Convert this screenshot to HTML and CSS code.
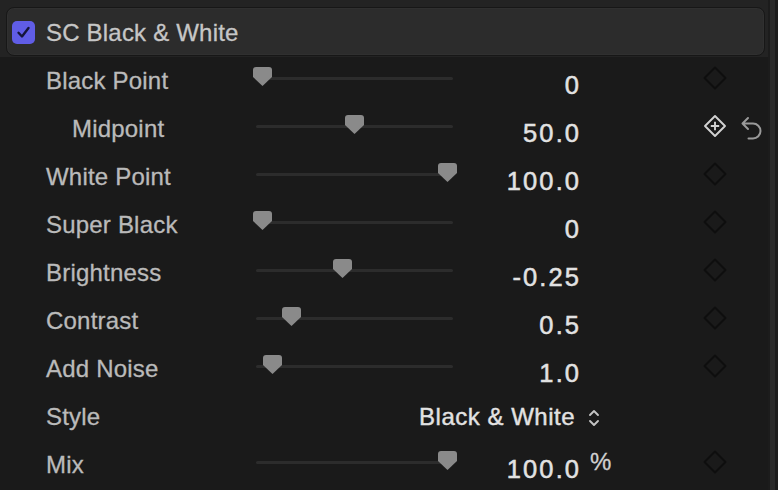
FILE: index.html
```html
<!DOCTYPE html>
<html lang="en">
<head>
  <meta charset="UTF-8">
  <title>SC Black &amp; White</title>
  <link rel="stylesheet" href="styles.css">
</head>
<body>
  <div class="panel">
    <div class="inspector">
      <div class="header-wrap">
        <div class="header">
          <span class="checkbox">
            <svg width="23" height="23" viewBox="0 0 23 23"><path d="M6.5 11.8 L10 15.5 L16.5 7" fill="none" stroke="#15153a" stroke-width="2.4" stroke-linecap="round" stroke-linejoin="round"/></svg>
          </span>
          <span class="title">SC Black &amp; White</span>
        </div>
      </div>

      <div class="rows">
        <div class="row">
          <div class="label">Black Point</div>
          <div class="slider"><div class="track"></div><svg class="thumb" style="left:-3px" width="19" height="19" viewBox="0 0 19 19"><path d="M3 0 H16 Q19 0 19 3 V10 L9.5 19 L0 10 V3 Q0 0 3 0 Z"/></svg></div>
          <div class="value num">0</div>
          <div class="unit"></div>
          <div class="key"><svg width="24" height="24" viewBox="0 0 24 24"><path d="M12 1.5 L22.5 12 L12 22.5 L1.5 12 Z"/></svg></div>
          <div class="reset"></div>
        </div>

        <div class="row">
          <div class="label sub">Midpoint</div>
          <div class="slider"><div class="track"></div><svg class="thumb" style="left:89px" width="19" height="19" viewBox="0 0 19 19"><path d="M3 0 H16 Q19 0 19 3 V10 L9.5 19 L0 10 V3 Q0 0 3 0 Z"/></svg></div>
          <div class="value num">50.0</div>
          <div class="unit"></div>
          <div class="key on"><svg width="24" height="24" viewBox="0 0 24 24"><path d="M12 2 L22 12 L12 22 L2 12 Z"/><path d="M12 7.8 V16.2 M7.8 12 H16.2"/></svg></div>
          <div class="reset">
            <svg width="23" height="27" viewBox="0 0 23 27"><path d="M8 3 L2.5 8.5 L8 14 M2.5 8.5 H13 A7.5 7.5 0 0 1 13 23.5 H8.5" fill="none" stroke="#9a9a9a" stroke-width="2" stroke-linecap="round" stroke-linejoin="round"/></svg>
          </div>
        </div>

        <div class="row">
          <div class="label">White Point</div>
          <div class="slider"><div class="track"></div><svg class="thumb" style="left:182px" width="19" height="19" viewBox="0 0 19 19"><path d="M3 0 H16 Q19 0 19 3 V10 L9.5 19 L0 10 V3 Q0 0 3 0 Z"/></svg></div>
          <div class="value num">100.0</div>
          <div class="unit"></div>
          <div class="key"><svg width="24" height="24" viewBox="0 0 24 24"><path d="M12 1.5 L22.5 12 L12 22.5 L1.5 12 Z"/></svg></div>
          <div class="reset"></div>
        </div>

        <div class="row">
          <div class="label">Super Black</div>
          <div class="slider"><div class="track"></div><svg class="thumb" style="left:-3px" width="19" height="19" viewBox="0 0 19 19"><path d="M3 0 H16 Q19 0 19 3 V10 L9.5 19 L0 10 V3 Q0 0 3 0 Z"/></svg></div>
          <div class="value num">0</div>
          <div class="unit"></div>
          <div class="key"><svg width="24" height="24" viewBox="0 0 24 24"><path d="M12 1.5 L22.5 12 L12 22.5 L1.5 12 Z"/></svg></div>
          <div class="reset"></div>
        </div>

        <div class="row">
          <div class="label">Brightness</div>
          <div class="slider"><div class="track"></div><svg class="thumb" style="left:77px" width="19" height="19" viewBox="0 0 19 19"><path d="M3 0 H16 Q19 0 19 3 V10 L9.5 19 L0 10 V3 Q0 0 3 0 Z"/></svg></div>
          <div class="value num">-0.25</div>
          <div class="unit"></div>
          <div class="key"><svg width="24" height="24" viewBox="0 0 24 24"><path d="M12 1.5 L22.5 12 L12 22.5 L1.5 12 Z"/></svg></div>
          <div class="reset"></div>
        </div>

        <div class="row">
          <div class="label">Contrast</div>
          <div class="slider"><div class="track"></div><svg class="thumb" style="left:26px" width="19" height="19" viewBox="0 0 19 19"><path d="M3 0 H16 Q19 0 19 3 V10 L9.5 19 L0 10 V3 Q0 0 3 0 Z"/></svg></div>
          <div class="value num">0.5</div>
          <div class="unit"></div>
          <div class="key"><svg width="24" height="24" viewBox="0 0 24 24"><path d="M12 1.5 L22.5 12 L12 22.5 L1.5 12 Z"/></svg></div>
          <div class="reset"></div>
        </div>

        <div class="row">
          <div class="label">Add Noise</div>
          <div class="slider"><div class="track"></div><svg class="thumb" style="left:7px" width="19" height="19" viewBox="0 0 19 19"><path d="M3 0 H16 Q19 0 19 3 V10 L9.5 19 L0 10 V3 Q0 0 3 0 Z"/></svg></div>
          <div class="value num">1.0</div>
          <div class="unit"></div>
          <div class="key"><svg width="24" height="24" viewBox="0 0 24 24"><path d="M12 1.5 L22.5 12 L12 22.5 L1.5 12 Z"/></svg></div>
          <div class="reset"></div>
        </div>

        <div class="row">
          <div class="label">Style</div>
          <div class="value popup">Black &amp; White</div>
          <div class="unit">
            <svg class="updown" width="14" height="20" viewBox="0 0 14 20"><path d="M3 7 L7 3 L11 7 M3 13 L7 17 L11 13" fill="none" stroke="#c4c4c4" stroke-width="1.9" stroke-linecap="round" stroke-linejoin="round"/></svg>
          </div>
          <div class="key"></div>
          <div class="reset"></div>
        </div>

        <div class="row">
          <div class="label">Mix</div>
          <div class="slider"><div class="track"></div><svg class="thumb" style="left:182px" width="19" height="19" viewBox="0 0 19 19"><path d="M3 0 H16 Q19 0 19 3 V10 L9.5 19 L0 10 V3 Q0 0 3 0 Z"/></svg></div>
          <div class="value num">100.0</div>
          <div class="unit pct">%</div>
          <div class="key"><svg width="24" height="24" viewBox="0 0 24 24"><path d="M12 1.5 L22.5 12 L12 22.5 L1.5 12 Z"/></svg></div>
          <div class="reset"></div>
        </div>
      </div>
    </div>
    <div class="scroll"></div>
  </div>
</body>
</html>
```

FILE: styles.css
```css
body {
  margin: 0;
  background: #1a1a1a;
  font-family: "Liberation Sans", Arial, sans-serif;
  overflow: hidden;
}
.panel {
  display: flex;
  width: 778px;
  height: 490px;
}
.inspector {
  width: 768px;
  background: #1a1a1a;
}
.scroll {
  width: 10px;
  background: linear-gradient(to right, #1c1c1c 0 2px, #2a2a2a 2px 7px, #1c1c1c 7px);
}
.header-wrap {
  background: #232323;
  padding: 7px 3px 1px 6px;
}
.header {
  height: 47px;
  display: flex;
  align-items: center;
  background: #2c2c2c;
  border: 1px solid #171717;
  border-radius: 8px;
  box-shadow: inset 0 0 0 1px #303030;
  padding-left: 5px;
}
.checkbox {
  width: 23px;
  height: 23px;
  border-radius: 5px;
  background: #605de6;
  display: flex;
  margin-top: 2px;
}
.title {
  margin-left: 11px;
  margin-top: 3px;
  font-size: 24px;
  color: #c6c6c6;
  letter-spacing: 0.2px;
  -webkit-text-stroke: 0.3px #c6c6c6;
}
.row {
  display: grid;
  grid-template-columns: 256px 197px 126px 124px 24px 1fr;
  height: 48px;
  align-items: center;
}
.label {
  padding-left: 46px;
  font-size: 24px;
  color: #bababa;
  line-height: 48px;
  letter-spacing: 0.2px;
  -webkit-text-stroke: 0.3px #bababa;
}
.label.sub {
  padding-left: 72px;
}
.slider {
  position: relative;
  height: 48px;
}
.track {
  position: absolute;
  left: 0;
  right: 0;
  top: 20px;
  height: 3px;
  border-radius: 2px;
  background: #2c2c2c;
}
.thumb {
  position: absolute;
  top: 10px;
  fill: #8a8a8a;
}
.value {
  text-align: right;
  font-size: 25px;
  color: #e2e2e2;
  line-height: 40px;
  padding-top: 8px;
  white-space: nowrap;
  -webkit-text-stroke: 0.5px #e2e2e2;
}
.value.num {
  letter-spacing: 2.1px;
  margin-right: -2.1px;
  font-size: 25.5px;
}
.value.popup {
  grid-column: 2 / 4;
  font-size: 24px;
  letter-spacing: 0.5px;
  margin-right: 4px;
  padding-top: 0;
  line-height: 48px;
  -webkit-text-stroke: 0.4px #e2e2e2;
}
.unit {
  padding-left: 8px;
  color: #d0d0d0;
}
.unit.pct {
  font-size: 24px;
  padding-left: 11px;
  padding-bottom: 6px;
  -webkit-text-stroke: 0.3px #d0d0d0;
}
.updown {
  display: block;
  margin-top: 2px;
}
.key {
  height: 24px;
  margin-top: -6px;
}
.key svg {
  display: block;
  fill: none;
  stroke: #0e0e0e;
  stroke-width: 2;
  stroke-linejoin: round;
}
.key.on svg {
  stroke: #d2d2d2;
  stroke-width: 1.9;
}
.reset {
  padding-left: 13px;
  margin-top: -1px;
}
.reset svg {
  display: block;
}
```
